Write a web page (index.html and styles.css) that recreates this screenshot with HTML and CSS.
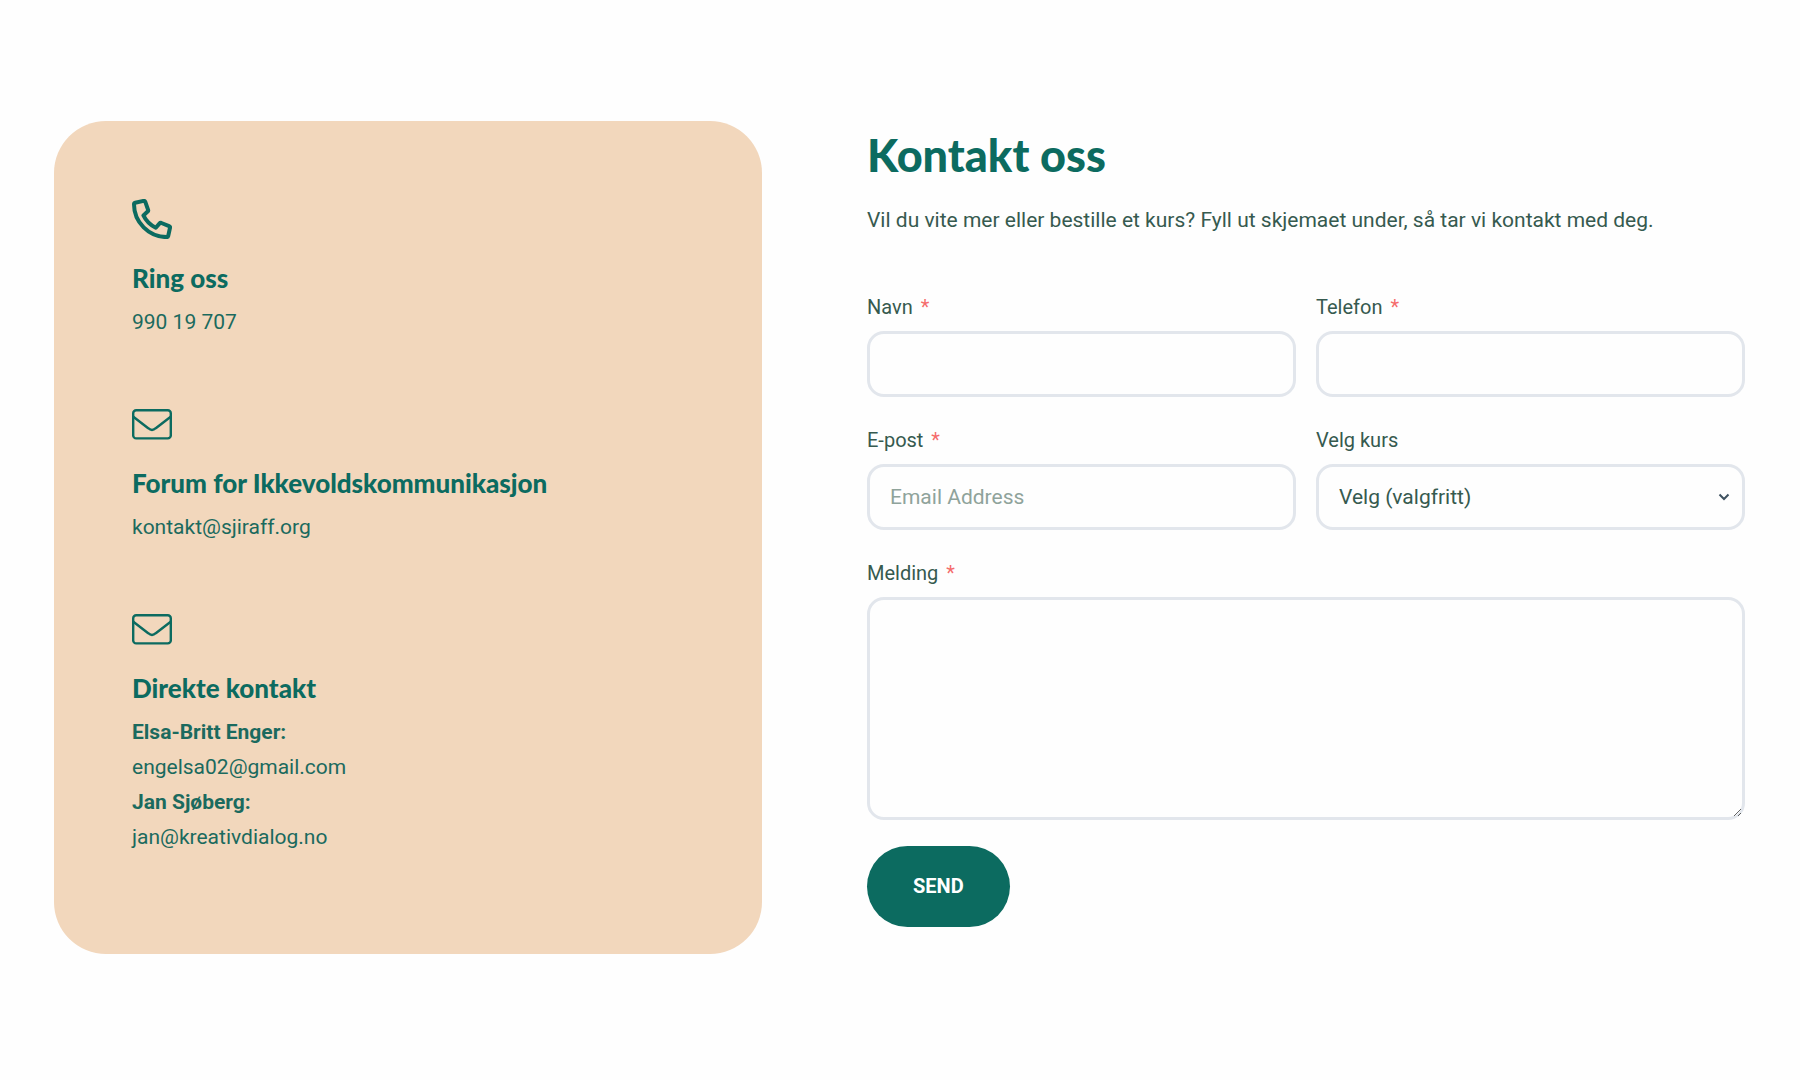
FILE: index.html
```
<!DOCTYPE html>
<html lang="no">
<head>
    <meta charset="UTF-8">
    <meta name="viewport" content="width=device-width, initial-scale=1.0">
    <title>Kontakt oss</title>
    <link rel="stylesheet" href="styles.css">
</head>
<body>

<main class="contact">
    <section class="contact-card">
        <div class="contact-item">
            <svg class="icon" viewBox="0 0 40 40" aria-hidden="true">
                <path class="phone" d="M3.2 3.8 L11.6 1.9 Q12.8 1.7 13.3 2.8 L16.1 10.8 Q16.5 11.9 15.6 12.6 L11.4 16.4 C14 21.8 18.2 26 23.8 28.8 L27.6 24.4 Q28.3 23.6 29.4 24 L37.1 27.1 Q38.3 27.6 38 28.8 L36.2 37 Q35.9 38.1 34.8 38.1 C16.8 38 2 23.2 2 5.3 Q2 4.1 3.2 3.8 Z"/>
            </svg>
            <h2>Ring oss</h2>
            <p><a href="tel:99019707">990 19 707</a></p>
        </div>

        <div class="contact-item">
            <svg class="icon" viewBox="0 0 40 40" aria-hidden="true">
                <rect x="1.2" y="6.2" width="37.6" height="28.2" rx="3"/>
                <path d="M1 12.5 L16.2 24.2 Q20 27.6 23.8 24.2 L39 12.5"/>
            </svg>
            <h2>Forum for Ikkevoldskommunikasjon</h2>
            <p><a href="mailto:kontakt@sjiraff.org">kontakt@sjiraff.org</a></p>
        </div>

        <div class="contact-item">
            <svg class="icon" viewBox="0 0 40 40" aria-hidden="true">
                <rect x="1.2" y="6.2" width="37.6" height="28.2" rx="3"/>
                <path d="M1 12.5 L16.2 24.2 Q20 27.6 23.8 24.2 L39 12.5"/>
            </svg>
            <h2>Direkte kontakt</h2>
            <p>
                <strong>Elsa-Britt Enger:</strong><br>
                <a href="mailto:engelsa02@gmail.com">engelsa02@gmail.com</a><br>
                <strong>Jan Sjøberg:</strong><br>
                <a href="mailto:jan@kreativdialog.no">jan@kreativdialog.no</a>
            </p>
        </div>
    </section>

    <section class="contact-form">
        <h1>Kontakt oss</h1>
        <p class="intro">Vil du vite mer eller bestille et kurs? Fyll ut skjemaet under, så tar vi kontakt med deg.</p>

        <form action="#" method="post">
            <div class="form-grid">
                <div class="field">
                    <label for="navn">Navn <span class="required">*</span></label>
                    <input type="text" id="navn" name="navn">
                </div>
                <div class="field">
                    <label for="telefon">Telefon <span class="required">*</span></label>
                    <input type="tel" id="telefon" name="telefon">
                </div>
                <div class="field">
                    <label for="epost">E-post <span class="required">*</span></label>
                    <input type="email" id="epost" name="epost" placeholder="Email Address">
                </div>
                <div class="field">
                    <label for="kurs">Velg kurs</label>
                    <div class="select-wrap">
                        <select id="kurs" name="kurs">
                            <option value="">Velg (valgfritt)</option>
                        </select>
                        <svg class="chevron" viewBox="0 0 12 8" aria-hidden="true">
                            <path d="M1.5 1.5 L6 6 L10.5 1.5"/>
                        </svg>
                    </div>
                </div>
                <div class="field wide">
                    <label for="melding">Melding <span class="required">*</span></label>
                    <textarea id="melding" name="melding"></textarea>
                </div>
            </div>
            <button type="submit">SEND</button>
        </form>
    </section>
</main>

</body>
</html>
```
FILE: styles.css
```
* {
    box-sizing: border-box;
}

body {
    margin: 0;
    background-color: #fefefe;
    color: #365a4f;
    font-family: Roboto, "Liberation Sans", sans-serif;
    font-size: 21px;
    line-height: 35px;
}

h1, h2, p {
    margin: 0;
}

h1, h2 {
    color: #0c6b60;
    font-family: Lato, "Liberation Sans", sans-serif;
    font-weight: 900;
}

.contact {
    display: grid;
    grid-template-columns: 708fr 878fr;
    column-gap: 105px;
    padding: 121px 55px 121px 54px;
}

/* left card */
.contact-card {
    display: flex;
    flex-direction: column;
    gap: 64px;
    padding: 78px 78px 99px;
    border-radius: 52px;
    background-color: #f2d7bc;
    color: #1b6a5e;
}

.contact-card a {
    color: inherit;
    text-decoration: none;
}

.contact-card h2 {
    margin: 19px 0 7px;
    font-size: 26px;
    line-height: 40px;
}

.contact-card strong {
    font-weight: 700;
}

.icon {
    display: block;
    width: 40px;
    height: 40px;
    fill: none;
    stroke: #0c6b60;
    stroke-width: 2.4;
}

.icon .phone {
    stroke-width: 4;
    stroke-linejoin: round;
}

/* form */
.contact-form h1 {
    padding-top: 4px;
    font-size: 45px;
    line-height: 60px;
}

.intro {
    margin: 18px 0 54px;
}

.form-grid {
    display: grid;
    grid-template-columns: 1fr 1fr;
    gap: 28px 20px;
}

.field {
    display: flex;
    flex-direction: column;
    gap: 9px;
}

.field.wide {
    grid-column: 1 / -1;
}

label {
    font-size: 20px;
    line-height: 30px;
}

.required {
    margin-left: 3px;
    color: #f56c6c;
}

input,
select,
textarea {
    display: block;
    width: 100%;
    height: 66px;
    margin: 0;
    padding: 0 20px;
    border: 3px solid #e2e6ec;
    border-radius: 17px;
    background-color: transparent;
    color: #365a4f;
    font-family: inherit;
    font-size: 21px;
}

input::placeholder {
    color: #8fa39b;
    opacity: 1;
}

select {
    appearance: none;
}

.select-wrap {
    position: relative;
}

.chevron {
    position: absolute;
    top: 29px;
    right: 15px;
    width: 12px;
    height: 8px;
    fill: none;
    stroke: #3f5260;
    stroke-width: 2;
    pointer-events: none;
}

textarea {
    height: 223px;
    padding: 16px 20px;
    resize: vertical;
}

button {
    display: block;
    margin-top: 26px;
    padding: 23px 46px;
    border: 0;
    border-radius: 41px;
    background-color: #0c6b60;
    color: #fff;
    font-family: inherit;
    font-size: 20px;
    font-weight: 700;
    line-height: 35px;
    cursor: pointer;
}

@media (max-width: 900px) {
    .contact {
        grid-template-columns: 1fr;
        row-gap: 60px;
        padding: 40px 20px;
    }
}
```
